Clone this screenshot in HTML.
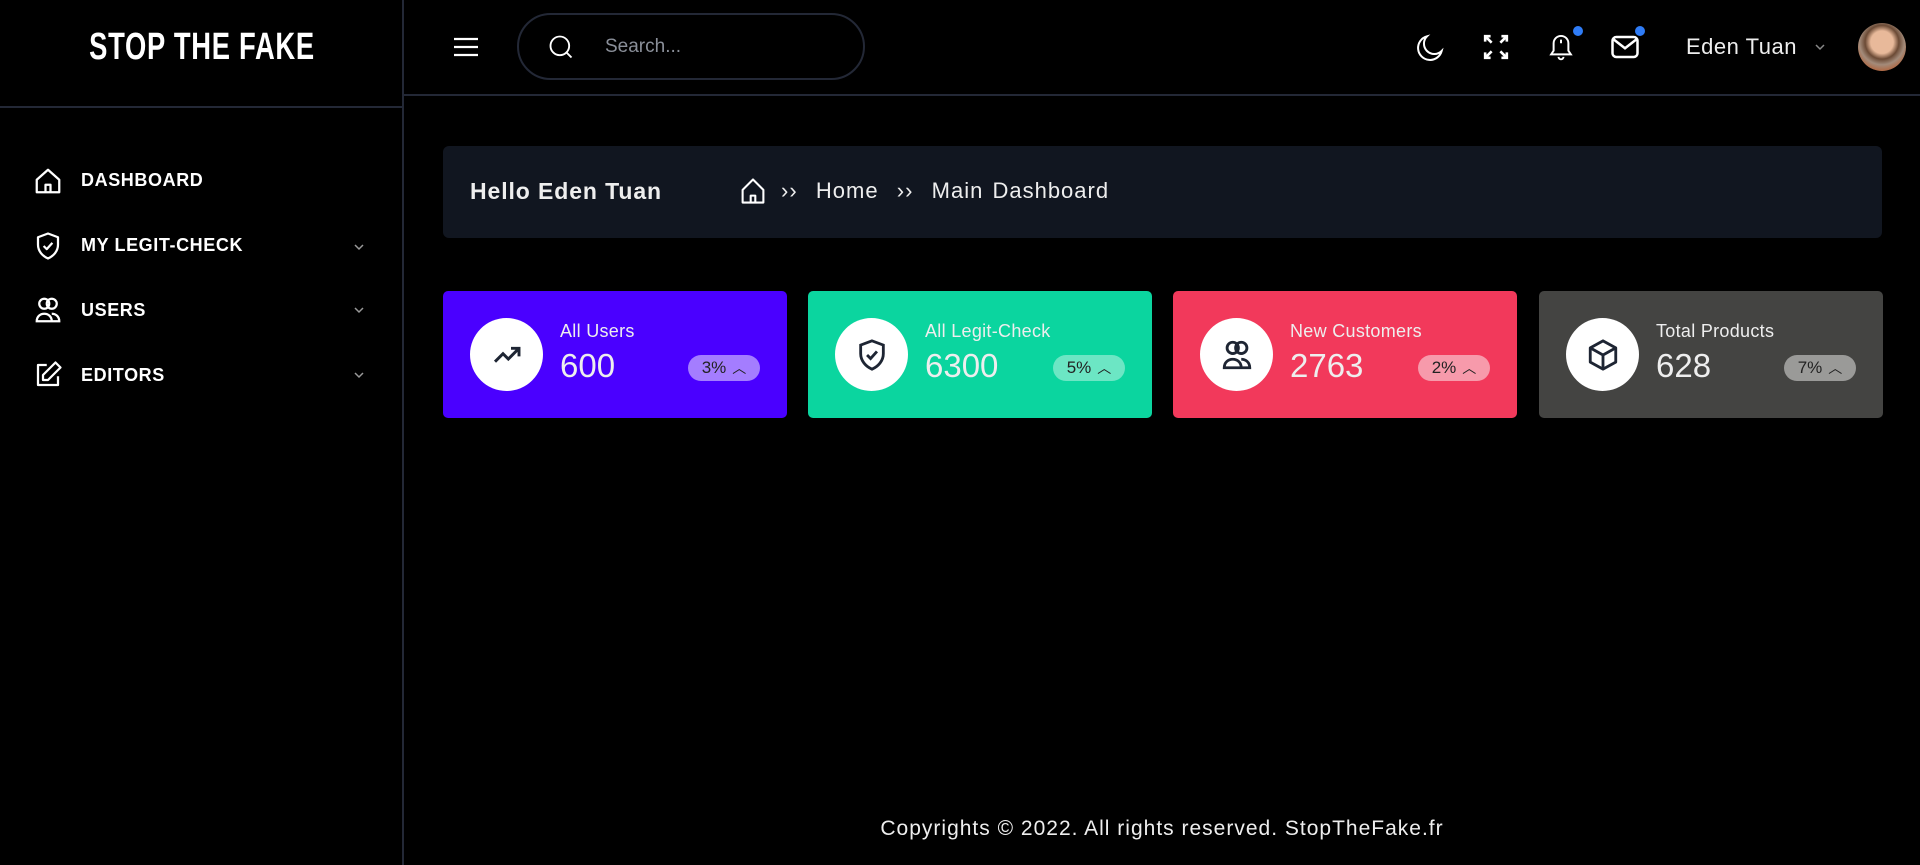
<!DOCTYPE html>
<html><head><meta charset="utf-8"><style>
*{margin:0;padding:0;box-sizing:border-box}
body{width:1920px;height:865px;background:#000;font-family:"Liberation Sans",sans-serif;color:#fff;position:relative;overflow:hidden}
.a{position:absolute}
.side{left:0;top:0;width:404px;height:865px;border-right:2px solid #232836}
.logo{left:0;top:26px;width:404px;text-align:center;font-size:38px;font-weight:bold;letter-spacing:1px;transform:scaleX(0.72);transform-origin:202px 0}
.mi{left:81px;font-size:18px;font-weight:bold;letter-spacing:.6px}
.ic{left:33px}
.chev{left:352px}
.card{top:291px;width:344px;height:127px;border-radius:5px}
.circ{left:27px;top:27px;width:73px;height:73px;border-radius:50%;background:#fff;display:flex;align-items:center;justify-content:center}
.t{left:117px;top:30px;font-size:18px;color:#eee;letter-spacing:.3px}
.n{left:117px;top:56px;font-size:33px;color:#eee}
.b{left:245px;top:64px;width:72px;height:26px;border-radius:13px;font-size:17px;color:#222;display:flex;align-items:center;justify-content:center;gap:6px}
</style></head><body>
<div class="a side"></div>
<div class="a" style="left:0;top:106px;width:403px;height:2px;background:#232836"></div>
<div class="a" style="left:404px;top:94px;width:1516px;height:2px;background:#232836"></div>
<div class="a logo">STOP THE FAKE</div>

<svg class="a ic" style="top:166px" width="30" height="30" viewBox="0 0 24 24" fill="none" stroke="#fff" stroke-width="1.8" stroke-linejoin="round"><path d="M3 11 12 3l9 8v10H3z"/><path d="M10 21v-6h4v6"/></svg>
<div class="a mi" style="top:170px">DASHBOARD</div>
<svg class="a ic" style="top:231px" width="30" height="30" viewBox="0 0 24 24" fill="none" stroke="#fff" stroke-width="1.8" stroke-linejoin="round"><path d="M12 2 4 5v6c0 5 3.5 9 8 11 4.5-2 8-6 8-11V5z"/><path d="m8.5 12 2.5 2.5 4.5-5"/></svg>
<div class="a mi" style="top:235px">MY LEGIT-CHECK</div>
<svg class="a ic" style="top:295px" width="30" height="30" viewBox="0 0 24 24" fill="none" stroke="#fff" stroke-width="1.8"><circle cx="9" cy="7" r="4"/><circle cx="15" cy="7" r="4"/><path d="M3 21c0-4 3-6 6-6s6 2 6 6zM15 15c3 0 6 2 6 6h-6"/></svg>
<div class="a mi" style="top:300px">USERS</div>
<svg class="a ic" style="top:360px" width="30" height="30" viewBox="0 0 24 24" fill="none" stroke="#fff" stroke-width="1.8" stroke-linejoin="round"><path d="M11 4H4v16h16v-7"/><path d="M18 2l4 4-10 10H8v-4z"/></svg>
<div class="a mi" style="top:365px">EDITORS</div>
<svg class="a chev" style="top:240px" width="14" height="14" viewBox="0 0 14 14" fill="none" stroke="#999" stroke-width="1.5"><path d="m3 5 4 4 4-4"/></svg>
<svg class="a chev" style="top:303px" width="14" height="14" viewBox="0 0 14 14" fill="none" stroke="#999" stroke-width="1.5"><path d="m3 5 4 4 4-4"/></svg>
<svg class="a chev" style="top:368px" width="14" height="14" viewBox="0 0 14 14" fill="none" stroke="#999" stroke-width="1.5"><path d="m3 5 4 4 4-4"/></svg>

<svg class="a" style="left:453px;top:34px" width="26" height="26" viewBox="0 0 26 26" stroke="#fff" stroke-width="2.2"><path d="M1 5h24M1 13h24M1 21h24"/></svg>
<div class="a" style="left:517px;top:13px;width:348px;height:67px;border:2px solid #232836;border-radius:34px"></div>
<svg class="a" style="left:547px;top:33px" width="28" height="28" viewBox="0 0 24 24" fill="none" stroke="#fff" stroke-width="1.6"><circle cx="11" cy="11" r="8"/><path d="m17 17 4 4"/></svg>
<div class="a" style="left:605px;top:36px;font-size:19px;color:#8a8f99">Search...</div>

<svg class="a" style="left:1415px;top:31px" width="32" height="32" viewBox="0 0 24 24" fill="none" stroke="#fff" stroke-width="1.5"><path d="M20 15A9 9 0 1 1 9 4a7 7 0 0 0 11 11z"/></svg>
<svg class="a" style="left:1483px;top:34px" width="26" height="26" viewBox="0 0 24 24" fill="none" stroke="#fff" stroke-width="2.4"><path d="M2 7V2h5M17 2h5v5M22 17v5h-5M7 22H2v-5M2 2l6 6M22 2l-6 6M22 22l-6-6M2 22l6-6"/></svg>
<svg class="a" style="left:1546px;top:31px" width="30" height="32" viewBox="0 0 24 26" fill="none" stroke="#fff" stroke-width="1.6"><path d="M6 10a6 6 0 0 1 12 0v6l2 3H4l2-3z"/><path d="M10 21a2 2 0 0 0 4 0M12 7v3"/></svg>
<div class="a" style="left:1573px;top:26px;width:10px;height:10px;border-radius:50%;background:#2f7cf6"></div>
<svg class="a" style="left:1610px;top:33px" width="30" height="28" viewBox="0 0 24 22" fill="none" stroke="#fff" stroke-width="2"><rect x="2" y="3" width="20" height="16" rx="3"/><path d="m3 5 9 7 9-7"/></svg>
<div class="a" style="left:1635px;top:26px;width:10px;height:10px;border-radius:50%;background:#2f7cf6"></div>
<div class="a" style="left:1686px;top:34px;font-size:22px;color:#eee;letter-spacing:.5px">Eden Tuan</div>
<svg class="a" style="left:1813px;top:40px" width="14" height="14" viewBox="0 0 14 14" fill="none" stroke="#888" stroke-width="1.5"><path d="m3 5 4 4 4-4"/></svg>
<div class="a" style="left:1858px;top:23px;width:48px;height:48px;border-radius:50%;background:radial-gradient(circle at 50% 40%,#e8b99a 0 30%,#6b4a35 45%,#a38b7a 60%,#b5582a 85%)"></div>

<div class="a" style="left:443px;top:146px;width:1439px;height:92px;border-radius:6px;background:#111620"></div>
<div class="a" style="left:470px;top:178px;font-size:23px;font-weight:bold;color:#eee;letter-spacing:.9px">Hello Eden Tuan</div>
<svg class="a" style="left:739px;top:176px" width="28" height="30" viewBox="0 0 24 26" fill="none" stroke="#fff" stroke-width="1.8" stroke-linejoin="round"><path d="M3 12 12 3l9 9v11H3z"/><path d="M10 23v-6h4v6"/></svg>
<div class="a" style="left:781px;top:178px;font-size:22px;color:#eee;letter-spacing:1px;word-spacing:2px">›› &nbsp;Home &nbsp;›› &nbsp;Main Dashboard</div>

<div class="a card" style="left:443px;background:#4a00ff">
<div class="a circ"><svg width="32" height="32" viewBox="0 0 24 24" fill="none" stroke="#1e2533" stroke-width="2.2"><path d="M3 17 9 11l4 4 8-8M15 7h6v6"/></svg></div>
<div class="a t">All Users</div><div class="a n">600</div>
<div class="a b" style="background:#a47dff">3% <span style="font-size:14px">︿</span></div></div>

<div class="a card" style="left:808px;background:#0bd59f">
<div class="a circ"><svg width="34" height="34" viewBox="0 0 24 24" fill="none" stroke="#1e2533" stroke-width="2"><path d="M12 2 4 5v6c0 5 3.5 9 8 11 4.5-2 8-6 8-11V5z"/><path d="m8.5 12 2.5 2.5 4.5-5"/></svg></div>
<div class="a t">All Legit-Check</div><div class="a n">6300</div>
<div class="a b" style="background:#6ce6c4">5% <span style="font-size:14px">︿</span></div></div>

<div class="a card" style="left:1173px;background:#f2395b">
<div class="a circ"><svg width="34" height="34" viewBox="0 0 24 24" fill="none" stroke="#1e2533" stroke-width="2"><circle cx="9" cy="7" r="4"/><circle cx="15" cy="7" r="4"/><path d="M3 21c0-4 3-6 6-6s6 2 6 6zM15 15c3 0 6 2 6 6h-6"/></svg></div>
<div class="a t">New Customers</div><div class="a n">2763</div>
<div class="a b" style="background:#f79aab">2% <span style="font-size:14px">︿</span></div></div>

<div class="a card" style="left:1539px;background:#444442">
<div class="a circ"><svg width="34" height="34" viewBox="0 0 24 24" fill="none" stroke="#1e2533" stroke-width="2" stroke-linejoin="round"><path d="M12 2 21 7v10l-9 5-9-5V7z"/><path d="M3 7l9 5 9-5M12 12v10"/></svg></div>
<div class="a t">Total Products</div><div class="a n">628</div>
<div class="a b" style="background:#9a9a98">7% <span style="font-size:14px">︿</span></div></div>

<div class="a" style="left:404px;width:1516px;top:817px;text-align:center;font-size:21px;color:#eee;letter-spacing:1px">Copyrights © 2022. All rights reserved. StopTheFake.fr</div>
</body></html>
